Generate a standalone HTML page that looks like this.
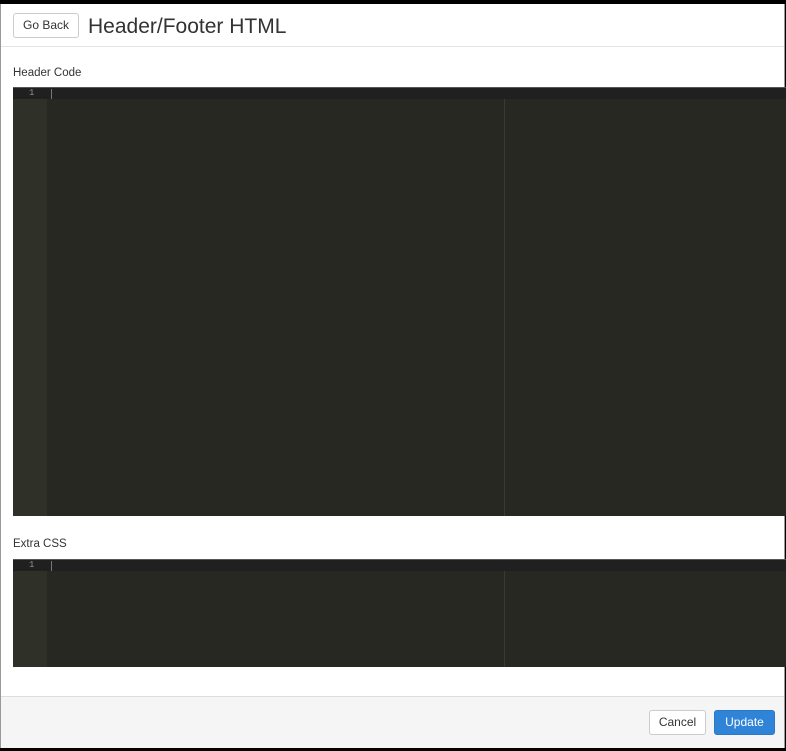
<!DOCTYPE html><html><head><style>
body{margin:0;width:786px;height:751px;overflow:hidden;background:#000;font-family:"Liberation Sans",sans-serif;}
.win{position:absolute;left:0;top:4px;width:785px;height:744px;background:#fff;border-left:1px solid #999;border-right:1px solid #999;box-sizing:border-box;}
.hdr{position:absolute;left:0;top:0;right:0;height:42px;border-bottom:1px solid #e5e5e5;}
.btn{position:absolute;box-sizing:border-box;border:1px solid #ccc;border-radius:3px;background:#fff;font-size:12px;color:#333;text-align:center;}
.title{position:absolute;left:87px;top:11px;font-size:21px;color:#333;}
.lbl{position:absolute;left:12px;font-size:11.5px;color:#333;}
.ed{position:absolute;left:12px;width:774px;background:#272822;border-top:1px solid #555;}
.gut{position:absolute;left:0;top:0;bottom:0;width:34px;background:#2f3129;}
.act{position:absolute;left:0;right:0;top:0;height:11px;background:#202020;}
.act span{position:absolute;left:16px;top:0;font-size:9px;color:#8f908a;font-family:"Liberation Mono",monospace}
.cur{position:absolute;left:38px;top:1px;width:1px;height:10px;background:#777;}
.pm{position:absolute;left:491px;top:11px;bottom:0;width:1px;background:#3b3a32;}
.foot{position:absolute;left:0;right:0;top:692px;bottom:0;background:#f5f5f5;border-top:1px solid #ddd;}
</style></head><body>
<div class="win">
<div class="hdr">
<div class="btn" style="left:12px;top:9px;width:66px;height:25px;line-height:23px;">Go Back</div>
<div class="title">Header/Footer HTML</div>
</div>
<div class="lbl" style="top:63px">Header Code</div>
<div class="ed" style="top:83px;height:428px"><div class="gut"></div><div class="act"><span>1</span></div><div class="cur"></div><div class="pm"></div></div>
<div class="lbl" style="top:534px">Extra CSS</div>
<div class="ed" style="top:555px;height:107px"><div class="gut"></div><div class="act"><span>1</span></div><div class="cur"></div><div class="pm"></div></div>
<div class="foot">
<div class="btn" style="left:648px;top:13px;width:57px;height:25px;line-height:23px;">Cancel</div>
<div class="btn" style="left:713px;top:13px;width:61px;height:25px;line-height:23px;background:#2f84d8;border-color:#2a78c6;color:#fff;">Update</div>
</div>
</div>
</body></html>
